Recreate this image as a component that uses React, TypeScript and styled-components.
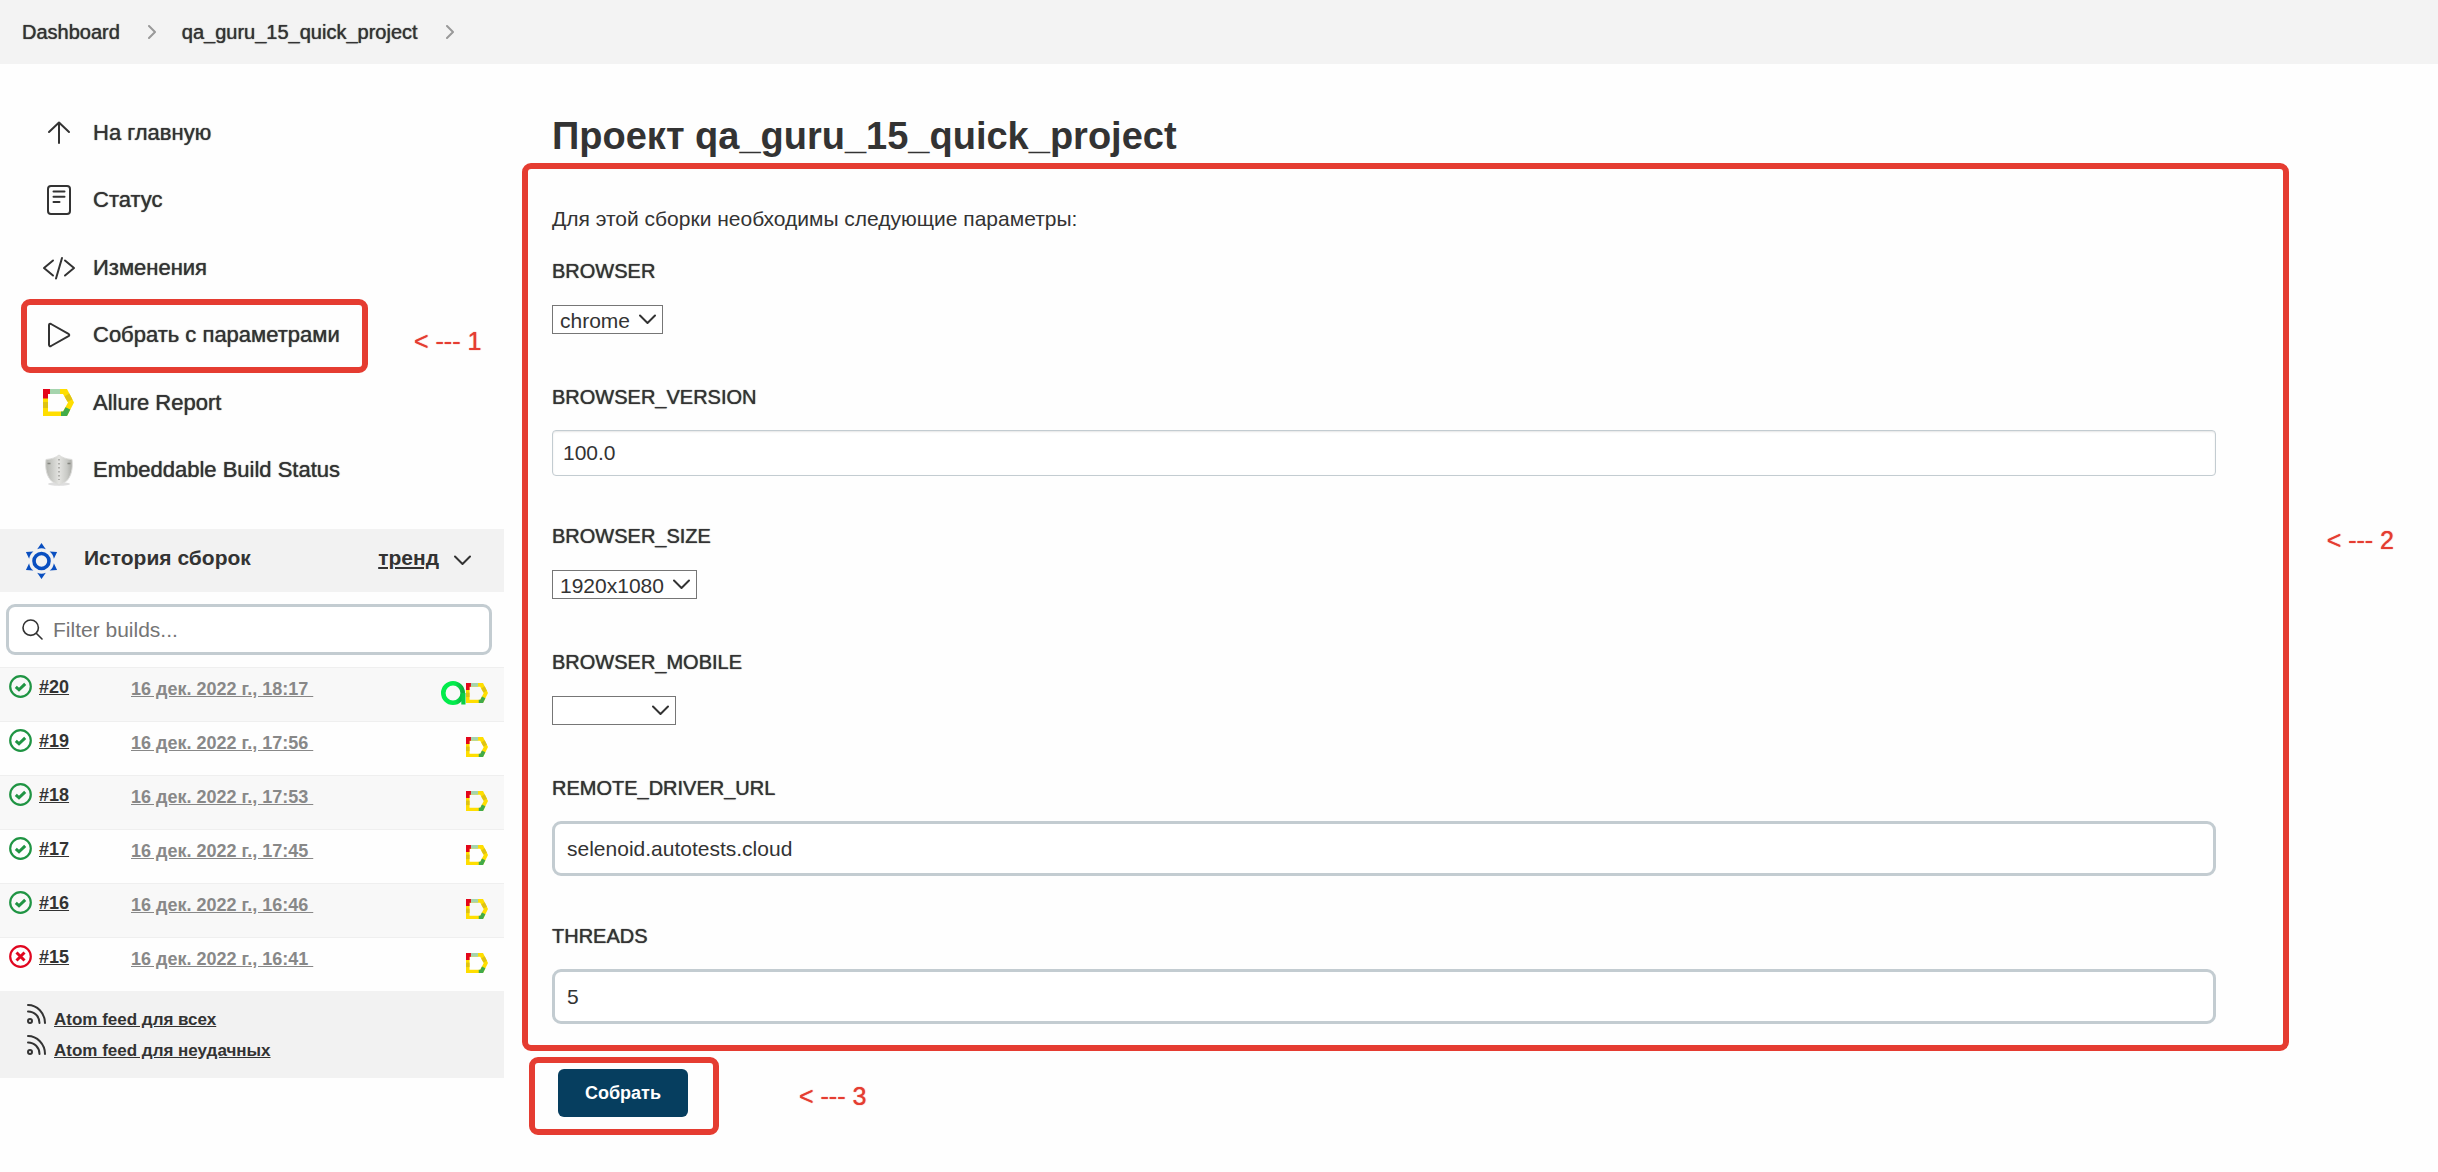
import React from "react";
import styled, { createGlobalStyle, css } from "styled-components";

const ink = "#333333";
const alert = "#e53c31";
const edge = "#c3ccd1";

const GlobalStyle = createGlobalStyle`
  *, *::before, *::after { box-sizing: border-box; }
  body {
    margin: 0;
    background: #fefefe;
    color: ${ink};
    font-family: "Liberation Sans", Arial, Helvetica, sans-serif;
    font-size: 21px;
    line-height: 30px;
  }
  h1, h2, p, ul, ol { margin: 0; padding: 0; }
  ul, ol { list-style: none; }
  svg { display: block; flex: none; }
  a { color: inherit; text-decoration: none; }
  input, select, button { font: inherit; color: inherit; }
`;

const medium = css`
  font-weight: 500;
  text-shadow: 0 0 1px currentColor;
`;

/* Breadcrumbs */

const Breadcrumbs = styled.nav`
  height: 64px;
  background: #f3f3f3;
`;

const CrumbList = styled.ol`
  display: flex;
  align-items: center;
  height: 100%;
  padding-left: 22px;
`;

const Crumb = styled.li`
  display: flex;
  align-items: center;
  gap: 28px;
  margin-right: 26px;
  font-size: 20px;
  ${medium}
`;

/* Page columns */

const Layout = styled.div`
  display: flex;
  align-items: flex-start;
`;

const Sidebar = styled.aside`
  flex: none;
  width: 504px;
  padding-top: 35px;
`;

const TaskList = styled.ul`
  display: grid;
  grid-auto-rows: 1fr;
  height: 405px;
  margin-bottom: 25px;
`;

const Task = styled.li`
  display: flex;
  align-items: center;
`;

const TaskFrame = styled.div<{ $marked?: boolean }>`
  position: relative;
  width: 347px;
  margin-left: 21px;
  padding-left: 20px;

  ${(p) =>
    p.$marked &&
    css`
      &::after {
        content: "";
        position: absolute;
        inset: -20px 0 -22px;
        border: 6px solid ${alert};
        border-radius: 9px;
        pointer-events: none;
      }
    `}
`;

const TaskLink = styled.a`
  display: flex;
  align-items: center;
  gap: 16px;
  font-size: 22px;
  white-space: nowrap;
  ${medium}
`;

const Note = styled.span`
  color: ${alert};
  font-size: 25px;
  white-space: nowrap;
  ${medium}
`;

const TaskNote = styled(Note)`
  margin: 12px 0 0 46px;
`;

/* Build history */

const HistoryHead = styled.div`
  display: flex;
  align-items: center;
  height: 63px;
  padding: 0 33px 0 25px;
  background: #f2f2f2;
  font-weight: bold;
`;

const HistoryTitle = styled.h2`
  flex: 1;
  margin-left: 26px;
  padding-bottom: 5px;
  font-size: 21px;
  font-weight: bold;
`;

const TrendLink = styled.a`
  margin-right: 15px;
  padding-bottom: 5px;
  text-decoration: underline;
`;

const IconButton = styled.button`
  padding: 0;
  border: 0;
  background: none;
`;

const FilterBox = styled.label`
  display: flex;
  align-items: center;
  gap: 10px;
  height: 51px;
  margin: 12px 12px 12px 6px;
  padding-left: 13px;
  border: 3px solid ${edge};
  border-radius: 9px;
  background: #fff;
`;

const FilterInput = styled.input`
  flex: 1;
  min-width: 0;
  padding: 0;
  border: 0;
  outline: 0;
  background: none;

  &::placeholder { color: #757575; opacity: 1; }
`;

const BuildTable = styled.table`
  width: 100%;
  table-layout: fixed;
  border-spacing: 0;
  font-size: 18px;
  font-weight: bold;
`;

const BuildRow = styled.tr`
  &:nth-child(odd) { background: #f8f8f8; }
`;

const BuildCell = styled.td<{ $width?: number }>`
  width: ${(p) => (p.$width ? `${p.$width}px` : "auto")};
  height: 54px;
  padding: 0;
  border-top: 1px solid #efefef;
  vertical-align: top;
`;

const BuildName = styled.div`
  display: flex;
  align-items: center;
  gap: 7px;
  height: 37px;
  padding-left: 9px;
`;

const BuildLink = styled.a`
  text-decoration: underline;
`;

const DateLink = styled.a`
  display: block;
  padding-top: 6px;
  color: #888;
  text-decoration: underline;
  white-space: pre;
`;

const Badges = styled.div`
  display: flex;
  align-items: center;
  justify-content: flex-end;
  height: 50px;
  padding-right: 16px;
`;

const Feeds = styled.ul`
  height: 87px;
  padding: 13px 0 0 27px;
  background: #f2f2f2;
  font-size: 17px;
  font-weight: bold;
`;

const Feed = styled.li`
  height: 31px;
`;

const FeedLink = styled.a`
  display: flex;
  gap: 8px;
  line-height: 31px;
`;

const FeedText = styled.span`
  text-decoration: underline;
`;

/* Project form */

const Main = styled.main`
  flex: 1;
  min-width: 0;
  padding: 45px 44px 0 18px;
`;

const Title = styled.h1`
  height: 54px;
  padding-left: 30px;
  font-size: 38px;
  line-height: 54px;
  font-weight: bold;
`;

const PanelRow = styled.div`
  display: flex;
  align-items: flex-start;
  gap: 38px;
`;

const PanelNote = styled(Note)`
  margin-top: 362px;
`;

const Panel = styled.div`
  flex: 1;
  min-width: 0;
  padding: 35px 67px 21px 24px;
  border: 6px solid ${alert};
  border-radius: 9px;
`;

const Intro = styled.p`
  margin-bottom: 22px;
`;

const Fields = styled.div`
  display: grid;
  gap: 45px;
`;

const Field = styled.div`
  display: grid;
  gap: 18px;
  justify-items: start;
`;

const FieldLabel = styled.label`
  font-size: 20px;
  ${medium}
`;

const TextInput = styled.input<{ $slim?: boolean }>`
  width: 100%;
  height: ${(p) => (p.$slim ? 46 : 55)}px;
  padding: 0 ${(p) => (p.$slim ? 10 : 12)}px;
  border: ${(p) => (p.$slim ? 1 : 3)}px solid ${edge};
  border-radius: ${(p) => (p.$slim ? 4 : 9)}px;
  outline: 0;
  background: #fff;
  box-shadow: ${(p) => (p.$slim ? "inset 0 1px 2px rgba(0, 0, 0, 0.1)" : "none")};
`;

const SelectBox = styled.div`
  display: grid;
  align-items: center;
  margin: 1px 0 3px;

  & > * { grid-area: 1 / 1; }
  & > svg {
    justify-self: end;
    margin-right: 7px;
    pointer-events: none;
  }
`;

const Select = styled.select<{ $width: number }>`
  appearance: none;
  width: ${(p) => p.$width}px;
  height: 29px;
  padding: 2px 0 0 7px;
  border: 1px solid #767676;
  border-radius: 0;
  outline: 0;
  background: #fff;
  line-height: 25px;
`;

const SubmitRow = styled.div`
  display: flex;
  align-items: center;
  gap: 80px;
  margin: 6px 0 0 7px;
`;

const SubmitFrame = styled.div`
  width: 190px;
  height: 78px;
  padding: 6px 0 0 23px;
  border: 6px solid ${alert};
  border-radius: 9px;
`;

const SubmitButton = styled.button`
  width: 130px;
  height: 48px;
  padding: 0;
  border: 0;
  border-radius: 6px;
  background: #063e5f;
  color: #fff;
  font-size: 18px;
  font-weight: bold;
`;

/* Icons */

const line = {
  fill: "none",
  stroke: ink,
  strokeWidth: 2,
  strokeLinecap: "round" as const,
  strokeLinejoin: "round" as const,
};

const ChevronRight = () => (
  <svg width="8" height="14" viewBox="0 0 8 14">
    <path d="M1 1l6 6-6 6" {...line} stroke="#999" />
  </svg>
);

const ChevronDown = () => (
  <svg width="17" height="11" viewBox="0 0 17 11">
    <path d="M1 1.500l7.500 7.500L16 1.500" {...line} />
  </svg>
);

const UpIcon = () => (
  <svg width="36" height="32" viewBox="0 0 36 32">
    <path d="M18 26V5.500M8 15L18 5.500 28 15" {...line} />
  </svg>
);

const StatusIcon = () => (
  <svg width="36" height="32" viewBox="0 0 36 32">
    <rect x="7" y="2" width="22" height="28" rx="3" {...line} />
    <path d="M12.500 7.500H23.500M12.500 12.800H23.500M12.500 18H18.500" {...line} />
  </svg>
);

const CodeIcon = () => (
  <svg width="36" height="32" viewBox="0 0 36 32">
    <path d="M12 8.500L3 16l9 7.500M24 8.500L33 16l-9 7.500M21 6l-6 20.500" {...line} />
  </svg>
);

const PlayIcon = () => (
  <svg width="36" height="32" viewBox="0 0 36 32">
    <path d="M8 6.200v19.600c0 1.200 1 1.700 2 1.200l17.500-9.800c1-.6 1-1.800 0-2.400L10 5c-1-.5-2 0-2 1.200z" {...line} />
  </svg>
);

const AllureShape = () => (
  <>
    <path d="M0 0H24L31 13.500 24 27H0zM5 5v17.500H20L25 13.500 20 5z" fill="#ffde00" fillRule="evenodd" />
    <path d="M0 0h7v5H5v4.500H0z" fill="#e3061a" />
    <path d="M7 0h10v5H7z" fill="#a5d4ad" />
    <path d="M26.300 4.500L29.500 10.500 24.500 12.800 21.500 7.500z" fill="#dfc313" />
    <path d="M22.500 18.300L27.300 20.500 24 27H18v-4.500h2.200z" fill="#41ab49" />
    <path d="M0 13h5v6H0z" fill="#dfc313" />
  </>
);

const AllureIcon = () => (
  <svg width="36" height="32" viewBox="0 0 36 32">
    <g transform="translate(2 2)">
      <AllureShape />
    </g>
  </svg>
);

const AllureBadge = () => (
  <svg width="22" height="20" viewBox="0 0 31 27" preserveAspectRatio="none">
    <AllureShape />
  </svg>
);

const TestOpsBadge = () => (
  <svg width="25" height="24" viewBox="0 0 25 24">
    <defs>
      <linearGradient id="ops" x1="0" x2="1" y1="0" y2="0">
        <stop offset="0.600" stopColor="#02ec4c" />
        <stop offset="1" stopColor="#0fae40" />
      </linearGradient>
    </defs>
    <circle cx="12" cy="12" r="9.700" fill="none" stroke="url(#ops)" strokeWidth="4.600" />
    <path d="M22.400 12v11.500" stroke="#08cf45" strokeWidth="4.200" />
  </svg>
);

const ShieldIcon = () => (
  <svg width="36" height="32" viewBox="0 0 36 32">
    <defs>
      <linearGradient id="steel" x1="0" x2="1" y1="0" y2="0">
        <stop offset="0" stopColor="#b4b5b0" />
        <stop offset="0.300" stopColor="#d0d1cd" />
        <stop offset="0.500" stopColor="#e4e4e1" />
        <stop offset="0.800" stopColor="#c9cac6" />
        <stop offset="1" stopColor="#a9aaa5" />
      </linearGradient>
    </defs>
    <ellipse cx="18" cy="30" rx="11" ry="1.800" fill="#dedede" />
    <path
      d="M18 1c3 2.500 7 4 13 4.500 1 9-.5 17-6 22l-7 3.500-7-3.500C5.500 22.500 4 14.500 5 5.500 11 5 15 3.500 18 1z"
      fill="url(#steel)"
      stroke="#dcdcda"
      strokeWidth="1"
    />
    <path d="M18 5v21" stroke="#b0b0ac" strokeWidth="2" strokeDasharray="1.500 2.500" />
    <path d="M6.500 9.500h3M26.500 9.500h3" stroke="#84857f" strokeWidth="1.500" />
  </svg>
);

const GearIcon = () => (
  <svg width="33" height="36" viewBox="0 0 33 36" fill="#0a4fc0">
    <circle cx="16.500" cy="18" r="7.500" fill="none" stroke="#0a4fc0" strokeWidth="3.600" />
    {[0, 60, 120, 180, 240, 300].map((turn) => (
      <path key={turn} d="M16.500 0l4.300 6.200q-4.300-1.800-8.600 0z" transform={`rotate(${turn} 16.500 18)`} />
    ))}
  </svg>
);

const SearchIcon = () => (
  <svg width="21" height="21" viewBox="0 0 21 21">
    <circle cx="8.700" cy="8.700" r="7.700" {...line} strokeWidth="1.600" />
    <path d="M14.500 14.500L20 20" {...line} strokeWidth="1.600" />
  </svg>
);

const ResultIcon = ({ ok }: { ok: boolean }) => (
  <svg width="23" height="23" viewBox="0 0 23 23" fill="none" stroke={ok ? "#1f9443" : "#e0061f"}>
    <circle cx="11.500" cy="11.500" r="10.300" strokeWidth="2.200" />
    <path d={ok ? "M6.800 11.800l3.200 3 6.200-6" : "M7.500 7.500l8 8M15.500 7.500l-8 8"} strokeWidth="3" />
  </svg>
);

const FeedIcon = () => (
  <svg width="19" height="20" viewBox="0 0 19 20">
    <circle cx="3" cy="17" r="2" {...line} />
    <path d="M1 1c9 0 17 8 17 18M1 7.500c6.500 0 11.500 5 11.500 11.500" {...line} />
  </svg>
);

/* Data */

const tasks = [
  { text: "На главную", icon: <UpIcon /> },
  { text: "Статус", icon: <StatusIcon /> },
  { text: "Изменения", icon: <CodeIcon /> },
  { text: "Собрать с параметрами", icon: <PlayIcon />, note: "< --- 1" },
  { text: "Allure Report", icon: <AllureIcon /> },
  { text: "Embeddable Build Status", icon: <ShieldIcon /> },
];

const builds = [
  { id: 20, time: "18:17", ok: true, testOps: true },
  { id: 19, time: "17:56", ok: true },
  { id: 18, time: "17:53", ok: true },
  { id: 17, time: "17:45", ok: true },
  { id: 16, time: "16:46", ok: true },
  { id: 15, time: "16:41", ok: false },
];

type Param = { name: string; value: string; selectWidth?: number; slim?: boolean };

const params: Param[] = [
  { name: "BROWSER", value: "chrome", selectWidth: 111 },
  { name: "BROWSER_VERSION", value: "100.0", slim: true },
  { name: "BROWSER_SIZE", value: "1920x1080", selectWidth: 145 },
  { name: "BROWSER_MOBILE", value: "", selectWidth: 124 },
  { name: "REMOTE_DRIVER_URL", value: "selenoid.autotests.cloud" },
  { name: "THREADS", value: "5" },
];

const ParamField = ({ name, value, selectWidth, slim }: Param) => (
  <Field>
    <FieldLabel htmlFor={name}>{name}</FieldLabel>
    {selectWidth ? (
      <SelectBox>
        <Select id={name} $width={selectWidth} defaultValue={value}>
          <option value={value}>{value}</option>
        </Select>
        <ChevronDown />
      </SelectBox>
    ) : (
      <TextInput id={name} type="text" $slim={slim} defaultValue={value} />
    )}
  </Field>
);

export default function App() {
  return (
    <>
      <GlobalStyle />
      <Breadcrumbs>
        <CrumbList>
          {["Dashboard", "qa_guru_15_quick_project"].map((name) => (
            <Crumb key={name}>
              <a href="#">{name}</a>
              <ChevronRight />
            </Crumb>
          ))}
        </CrumbList>
      </Breadcrumbs>

      <Layout>
        <Sidebar>
          <TaskList>
            {tasks.map(({ text, icon, note }) => (
              <Task key={text}>
                <TaskFrame $marked={Boolean(note)}>
                  <TaskLink href="#">
                    {icon}
                    {text}
                  </TaskLink>
                </TaskFrame>
                {note && <TaskNote>{note}</TaskNote>}
              </Task>
            ))}
          </TaskList>

          <HistoryHead>
            <GearIcon />
            <HistoryTitle>История сборок</HistoryTitle>
            <TrendLink href="#">тренд</TrendLink>
            <IconButton type="button" aria-label="Свернуть">
              <ChevronDown />
            </IconButton>
          </HistoryHead>

          <FilterBox>
            <SearchIcon />
            <FilterInput type="text" placeholder="Filter builds..." />
          </FilterBox>

          <BuildTable>
            <tbody>
              {builds.map(({ id, time, ok, testOps }) => (
                <BuildRow key={id}>
                  <BuildCell $width={131}>
                    <BuildName>
                      <ResultIcon ok={ok} />
                      <BuildLink href="#">#{id}</BuildLink>
                    </BuildName>
                  </BuildCell>
                  <BuildCell>
                    <DateLink href="#">{`16 дек. 2022 г., ${time}\u00a0`}</DateLink>
                  </BuildCell>
                  <BuildCell $width={80}>
                    <Badges>
                      {testOps && <TestOpsBadge />}
                      <AllureBadge />
                    </Badges>
                  </BuildCell>
                </BuildRow>
              ))}
            </tbody>
          </BuildTable>

          <Feeds>
            {["Atom feed для всех", "Atom feed для неудачных"].map((text) => (
              <Feed key={text}>
                <FeedLink href="#">
                  <FeedIcon />
                  <FeedText>{text}</FeedText>
                </FeedLink>
              </Feed>
            ))}
          </Feeds>
        </Sidebar>

        <Main>
          <Title>Проект qa_guru_15_quick_project</Title>
          <form onSubmit={(event) => event.preventDefault()}>
            <PanelRow>
              <Panel>
                <Intro>Для этой сборки необходимы следующие параметры:</Intro>
                <Fields>
                  {params.map((param) => (
                    <ParamField key={param.name} {...param} />
                  ))}
                </Fields>
              </Panel>
              <PanelNote>{"< --- 2"}</PanelNote>
            </PanelRow>
            <SubmitRow>
              <SubmitFrame>
                <SubmitButton type="submit">Собрать</SubmitButton>
              </SubmitFrame>
              <Note>{"< --- 3"}</Note>
            </SubmitRow>
          </form>
        </Main>
      </Layout>
    </>
  );
}
